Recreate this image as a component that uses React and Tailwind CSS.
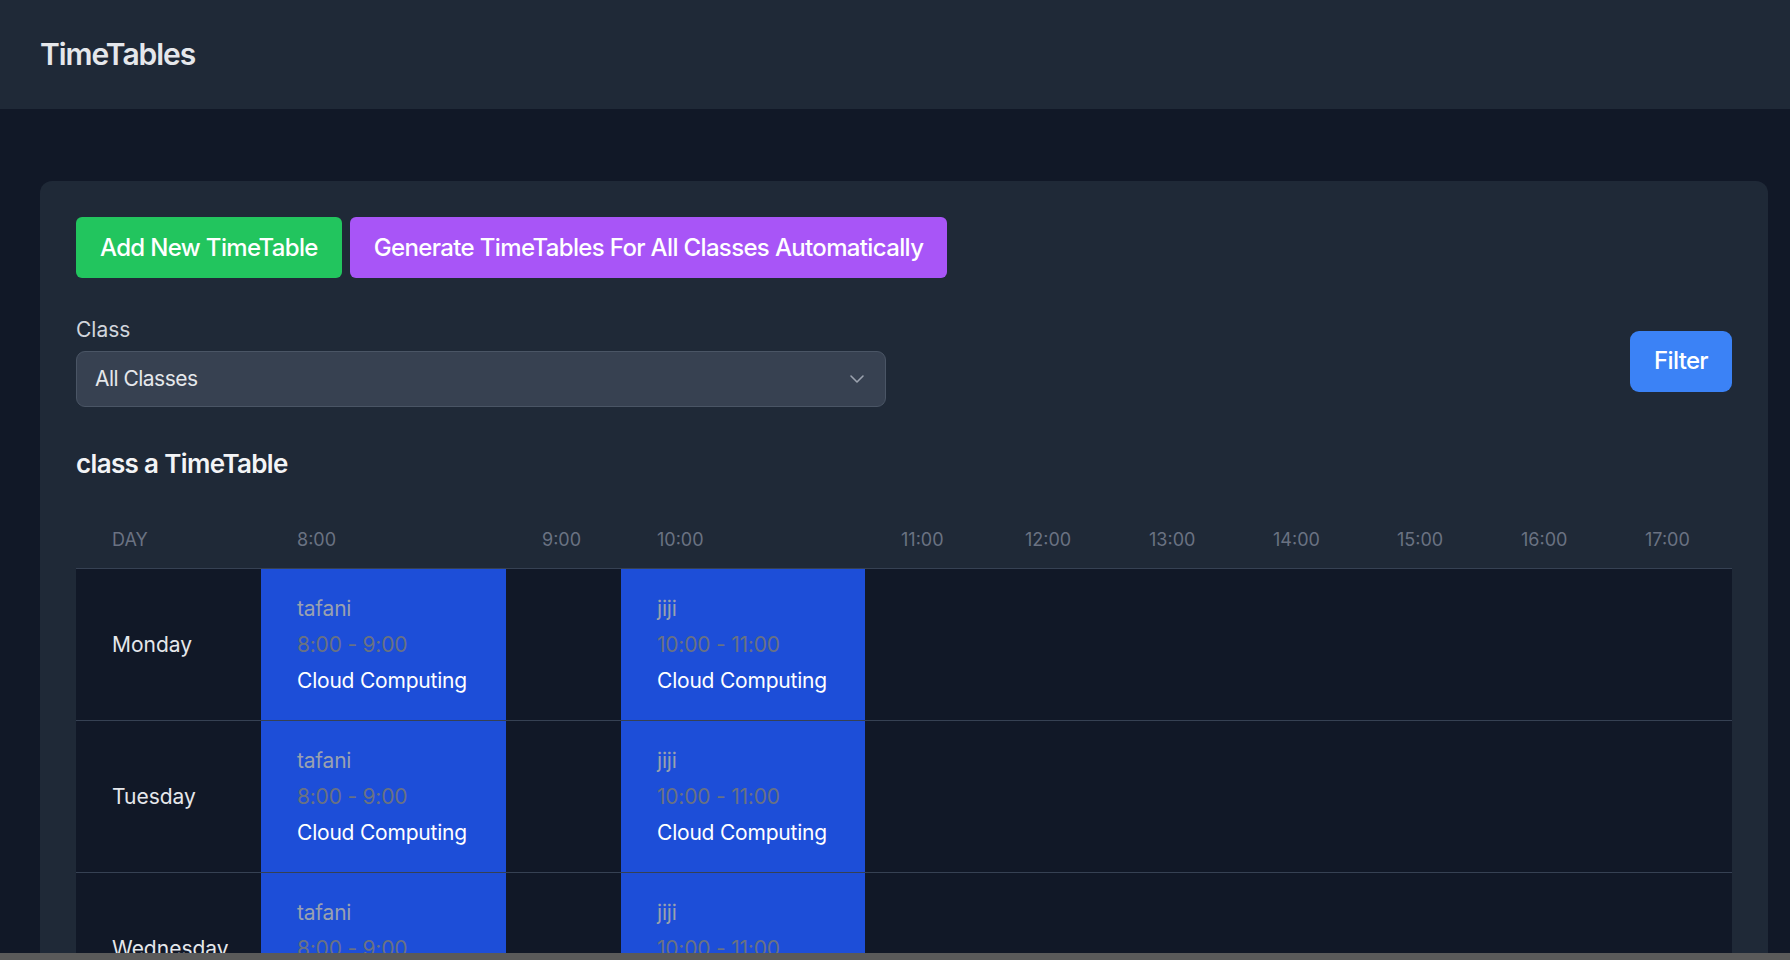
import React from 'react';

const hours = ['8:00', '9:00', '10:00', '11:00', '12:00', '13:00', '14:00', '15:00', '16:00', '17:00'];

// lessons keyed by start hour
const lessons = {
  '8:00': { teacher: 'tafani', time: '8:00 - 9:00', subject: 'Cloud Computing' },
  '10:00': { teacher: 'jiji', time: '10:00 - 11:00', subject: 'Cloud Computing' },
};

const days = ['Monday', 'Tuesday', 'Wednesday', 'Thursday', 'Friday'];

const gridCols = 'grid grid-cols-[185px_245px_115px_244px_124px_124px_124px_124px_124px_124px_123px]';

const App = () => {
  return (
    <div className="h-screen overflow-hidden bg-[#111827] font-['Inter','Liberation_Sans',sans-serif]">
      {/* Header */}
      <header className="h-[109px] bg-[#1f2937] flex items-center px-[40px]">
        <h1 className="text-[30px] font-semibold text-gray-200 tracking-[-0.035em]">TimeTables</h1>
      </header>

      <main className="pt-[72px] pl-[40px]">
        <div className="w-[1728px] bg-[#1f2937] rounded-[12px] p-[36px]">
          {/* Action buttons */}
          <div className="flex gap-[8px] mb-[37px]">
            <button className="h-[61px] px-[24px] rounded-[6px] bg-[#22c55e] text-white text-[24px] font-medium tracking-[-0.027em]">
              Add New TimeTable
            </button>
            <button className="h-[61px] px-[24px] rounded-[6px] bg-[#a855f7] text-white text-[24px] font-medium tracking-[-0.027em]">
              Generate TimeTables For All Classes Automatically
            </button>
          </div>

          {/* Filter row */}
          <div className="flex items-center justify-between">
            <div className="w-[810px]">
              <label className="block text-[21px] leading-[30px] text-gray-300 mb-[6px]">Class</label>
              <div className="h-[56px] rounded-[9px] border border-gray-600 bg-[#374151] flex items-center justify-between pl-[18px] pr-[16px]">
                <span className="text-[21px] text-gray-200 tracking-tight">All Classes</span>
                <svg width="24" height="24" viewBox="0 0 24 24" fill="none" stroke="#9ca3af" strokeWidth="1.6" strokeLinecap="round" strokeLinejoin="round">
                  <path d="M6 9l6 6 6-6" />
                </svg>
              </div>
            </div>
            <button className="h-[61px] px-[24px] rounded-[9px] bg-[#3b82f6] text-white text-[24px] font-medium tracking-[-0.027em]">
              Filter
            </button>
          </div>

          {/* Timetable */}
          <h2 className="mt-[37px] mb-[26px] text-[26px] leading-[40px] font-semibold text-gray-100 tracking-tight">
            class a TimeTable
          </h2>

          <div className={`${gridCols} h-[59px] items-center border-b border-gray-700`}>
            <div className="pl-[36px] text-[18px] text-gray-500 uppercase">Day</div>
            {hours.map((h) => (
              <div key={h} className="pl-[36px] text-[18px] text-gray-500">{h}</div>
            ))}
          </div>

          {days.map((day) => (
            <div key={day} className={`${gridCols} bg-[#111827] border-b border-gray-700`}>
              <div className="pl-[36px] flex items-center text-[21px] text-gray-200">{day}</div>
              {hours.map((h) => {
                const l = lessons[h];
                if (!l) return <div key={h} />;
                return (
                  <div key={h} className="bg-[#1d4ed8] pl-[36px] pt-[25px] pb-[24px] flex flex-col gap-[6px] text-[21px] leading-[30px] whitespace-nowrap tracking-[-0.01em]">
                    <span className="text-gray-400">{l.teacher}</span>
                    <span className="text-gray-500">{l.time}</span>
                    <span className="text-white">{l.subject}</span>
                  </div>
                );
              })}
            </div>
          ))}
        </div>
      </main>

      {/* horizontal scrollbar of the window */}
      <div className="fixed left-0 right-0 bottom-0 h-[7px] bg-[#5a5a5a]" />
    </div>
  );
};

export default App;
